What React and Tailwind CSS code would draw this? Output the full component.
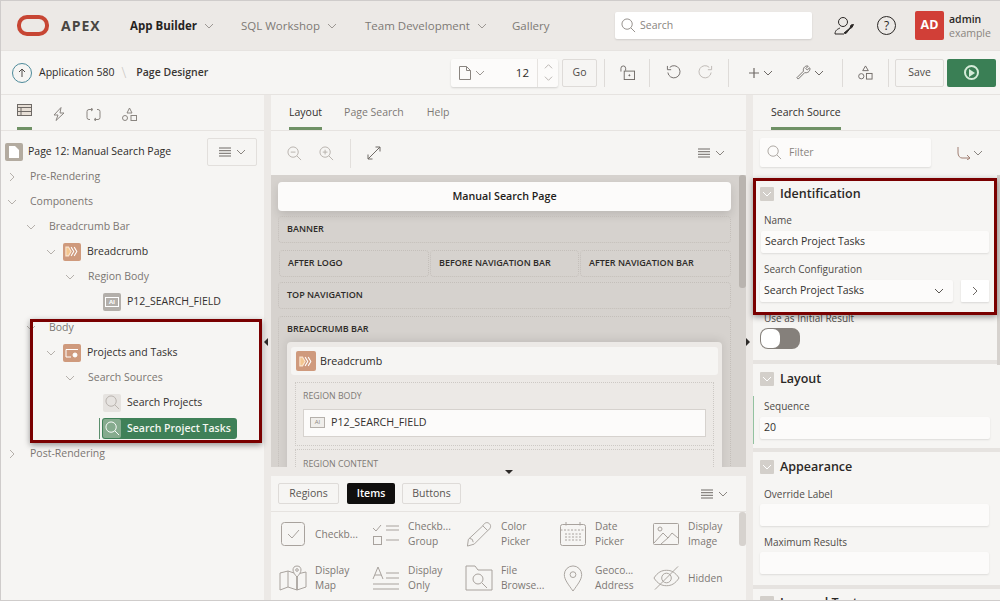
import React from "react";

const Chev = ({ className = "w-[10px] h-[10px] text-[#8a8580]" }) => (
  <svg viewBox="0 0 10 10" className={className} fill="none" stroke="currentColor" strokeWidth="1">
    <path d="M1 3l4 4 4-4" />
  </svg>
);

const ChevRight = ({ className = "w-[10px] h-[10px] text-[#b5b0ab]" }) => (
  <svg viewBox="0 0 10 10" className={className} fill="none" stroke="currentColor" strokeWidth="1">
    <path d="M3 1l4 4-4 4" />
  </svg>
);

const Lens = ({ className = "w-4 h-4 text-[#8f8a85]" }) => (
  <svg viewBox="0 0 16 16" className={className} fill="none" stroke="currentColor" strokeWidth="1">
    <circle cx="6.500" cy="6.500" r="5.500" />
    <path d="M10.500 10.500L15 15" />
  </svg>
);

const MenuBtn = () => (
  <div className="flex items-center gap-[5px]">
    <svg viewBox="0 0 12 10" className="w-[12px] h-[10px] text-[#6f6a66]" fill="none" stroke="currentColor" strokeWidth="1">
      <path d="M0 1h12M0 3.700h12M0 6.300h12M0 9h12" />
    </svg>
    <Chev />
  </div>
);

const Sep = ({ className }) => <div className={`w-px h-[28px] bg-[#dedbd8] ${className}`} />;

const BreadcrumbIcon = ({ className }) => (
  <div className={`bg-[#cf9a7d] rounded-[2px] flex items-center justify-center ${className}`}>
    <svg viewBox="0 0 16 12" className="w-[14px] h-[11px]" fill="none" stroke="#fff" strokeWidth="1.200">
      <path d="M1 1h3l3 5-3 5H1z" fill="#f3c690" stroke="#fbe6d2" />
      <path d="M7 1l3 5-3 5M10.500 1l3 5-3 5" />
    </svg>
  </div>
);

const TreeRow = ({ indent, arrow, icon, dark, className = "", children }) => (
  <div className={`h-[25px] flex items-center text-[10.5px] whitespace-nowrap ${dark ? "text-[#33302e]" : "text-[#7b7672]"} ${indent} ${className}`}>
    {arrow === "right" && <ChevRight className="w-[10px] h-[10px] text-[#b5b0ab] mr-[13px]" />}
    {arrow === "down" && <Chev className="w-[10px] h-[10px] text-[#b5b0ab] mr-[13px]" />}
    {icon}
    {children}
  </div>
);

const RegionBox = ({ children, className = "" }) => (
  <div className={`border border-dotted border-[#c4bfba] rounded-[4px] text-[9px] font-semibold text-[#2d2a28] px-2 pb-[2px] flex items-center whitespace-nowrap ${className}`}>
    {children}
  </div>
);

const stroke = "#a8a29d";

const galleryIcons = {
  check: (
    <svg viewBox="0 0 26 26" className="w-[26px] h-[26px]" fill="none" stroke={stroke}>
      <rect x="1.500" y="1.500" width="23" height="23" rx="3" />
      <path d="M8 13l4 4 7-8" />
    </svg>
  ),
  group: (
    <svg viewBox="0 0 28 22" className="w-[28px] h-[22px]" fill="none" stroke={stroke}>
      <path d="M1 5l3 3 5-6M14 3h13M14 7h13M14 17h13" />
      <rect x="1.500" y="13.500" width="8" height="8" />
    </svg>
  ),
  color: (
    <svg viewBox="0 0 28 28" className="w-[28px] h-[27px]" fill="none" stroke={stroke}>
      <path d="M2 26l1-7L18 5l5 5L9 24zM18 5c2-4 5-4 7-2s1 5-2 7M4 18l3 1 1 3" />
    </svg>
  ),
  date: (
    <svg viewBox="0 0 28 26" className="w-[28px] h-[26px]" fill="none" stroke={stroke}>
      <rect x="1.500" y="3.500" width="25" height="21" rx="2" />
      <path d="M1.500 9h25M7 1v4M21 1v4M6 13h16M6 16h16M6 19h16" strokeDasharray="2 1.500" />
    </svg>
  ),
  image: (
    <svg viewBox="0 0 28 24" className="w-[28px] h-[24px]" fill="none" stroke={stroke}>
      <rect x="1.500" y="1.500" width="25" height="21" rx="1" />
      <circle cx="8" cy="7" r="2" />
      <path d="M2 21l9-10 5 5 4-5 6 5M9 22l8-7" />
    </svg>
  ),
  map: (
    <svg viewBox="0 0 28 26" className="w-[28px] h-[26px]" fill="none" stroke={stroke}>
      <path d="M1 8l8-2 9 3v16l-9-3-8 3zM9 6v16M18 9l9-2v15l-9 3zM18 9v16" />
      <path d="M18 1c3 0 4 2 4 4 0 2-2 5-4 7-2-2-4-5-4-7 0-2 1-4 4-4z" fill="#f6f5f3" />
      <circle cx="18" cy="5" r="1.300" />
    </svg>
  ),
  only: (
    <svg viewBox="0 0 28 24" className="w-[28px] h-[24px]" fill="none" stroke={stroke}>
      <path d="M1 13L6 1l5 12M3 9h6M14 7h13M14 12h13M1 18h26M1 23h26" />
    </svg>
  ),
  file: (
    <svg viewBox="0 0 28 26" className="w-[28px] h-[26px]" fill="none" stroke={stroke}>
      <path d="M1 25V1h9l3 4h14v20z" />
      <circle cx="13" cy="14" r="5" />
      <path d="M17 18l5 5" />
    </svg>
  ),
  geo: (
    <svg viewBox="0 0 20 28" className="w-[20px] h-[27px]" fill="none" stroke={stroke}>
      <path d="M10 27C5 20 1 15 1 10a9 9 0 0118 0c0 5-4 10-9 17z" />
      <circle cx="10" cy="10" r="3" />
    </svg>
  ),
  hidden: (
    <svg viewBox="0 0 28 26" className="w-[27px] h-[26px]" fill="none" stroke={stroke}>
      <path d="M1 13c4-6 8-8 13-8s9 2 13 8c-4 6-8 8-13 8s-9-2-13-8z" />
      <circle cx="14" cy="13" r="5" />
      <path d="M2 25L26 1" />
    </svg>
  ),
};

const GalleryItem = ({ icon, width, children }) => (
  <div className={`flex items-center h-[44px] ${width}`}>
    <div className="w-[42px] flex justify-center shrink-0">{galleryIcons[icon]}</div>
    <div className="ml-[1px] text-[10.2px] leading-[15px] text-[#7d7873] whitespace-nowrap">{children}</div>
  </div>
);

const SectionHead = ({ children, className = "" }) => (
  <div className={`flex items-center h-[24px] px-[7px] ${className}`}>
    <div className="w-[14px] h-[14px] rounded-[1px] bg-[#d3cfca] flex items-center justify-center">
      <Chev className="w-[10px] h-[10px] text-white" />
    </div>
    <span className="ml-[6px] text-[12.5px] font-semibold text-[#2b2826] whitespace-nowrap">{children}</span>
  </div>
);

const Label = ({ children, className = "" }) => (
  <div className={`text-[10px] leading-[14px] text-[#4f4b48] px-[11px] ${className}`}>{children}</div>
);

const Field = ({ children, className = "" }) => (
  <div className={`h-[22px] ml-[7px] bg-[#fcfbfa] rounded-[2px] shadow-[0_1px_2px_rgba(0,0,0,0.1)] text-[10.5px] text-[#33302e] flex items-center px-[4px] ${className}`}>
    {children}
  </div>
);

const NavItem = ({ width, bold, children }) => (
  <div className={`flex items-center whitespace-nowrap ${width}`}>
    <span className={bold ? "font-bold text-[#26231f]" : ""}>{children}</span>
    <Chev className="w-[10px] h-[10px] ml-[7px] text-[#9c9793]" />
  </div>
);

export default function App() {
  return (
    <div
      className="relative w-[1000px] h-[601px] overflow-hidden bg-[#ece9e6] border-t border-l border-b border-[#cfcccb] text-[#33302e]"
      style={{ fontFamily: '"Open Sans", sans-serif' }}
    >
      {/* top nav */}
      <div className="h-[49px] bg-[#ece9e6] flex items-center text-[11.5px] text-[#7d7975]">
        <div className="w-[614px] shrink-0 flex items-center">
          <div className="w-[32px] h-[21px] ml-[16px] border-[4px] border-[#c74634] rounded-[10px]" />
          <span className="ml-[12px] w-[69px] text-[14px] font-bold tracking-[1px] text-[#494643]">APEX</span>
          <NavItem width="w-[111px]" bold>App Builder</NavItem>
          <NavItem width="w-[124px]">SQL Workshop</NavItem>
          <NavItem width="w-[147px]">Team Development</NavItem>
          <span>Gallery</span>
        </div>
        <div className="w-[197px] h-[27px] bg-white rounded-[2px] shadow-[0_1px_2px_rgba(0,0,0,0.12)] flex items-center px-[6px]">
          <Lens className="w-[15px] h-[15px] text-[#8f8a85]" />
          <span className="ml-[4px] text-[10.5px] text-[#8a8580]">Search</span>
        </div>
        <svg viewBox="0 0 20 20" className="ml-[22px] w-[20px] h-[20px]" fill="none" stroke="#2a2725" strokeWidth="1">
          <circle cx="9" cy="6" r="4.500" />
          <path d="M1 18c0-4 3-5 5-6M1 18h9" />
          <path d="M10 17l6-5 1-3 2.500-.5-1.500 3-2 1-4 5z" fill="#2a2725" />
        </svg>
        <div className="ml-[23px] w-[19px] h-[19px] rounded-full border border-[#2a2725] flex items-center justify-center text-[12px] text-[#2a2725]">?</div>
        <div className="ml-[19px] w-[29px] h-[29px] rounded-[2px] bg-[#d13f37] flex items-center justify-center text-white text-[12.5px] font-bold">AD</div>
        <div className="ml-[5px] text-[10.5px] leading-[14px] whitespace-nowrap">
          <div className="font-semibold text-[#2a2725]">admin</div>
          <div className="text-[#8a8580]">example</div>
        </div>
      </div>

      {/* page designer toolbar */}
      <div className="h-[45px] bg-[#f6f5f3] border-t border-b border-[#e6e3e0] flex items-center text-[10.5px]">
        <div className="w-[450px] shrink-0 flex items-center whitespace-nowrap">
          <div className="ml-[11px] w-[20px] h-[20px] rounded-full border border-[#4d8a9a] flex items-center justify-center">
            <svg viewBox="0 0 10 10" className="w-[10px] h-[10px]" fill="none" stroke="#4f4b48">
              <path d="M5 9V1M2 4l3-3 3 3" />
            </svg>
          </div>
          <span className="ml-[7px] text-[#2d2a28]">Application 580</span>
          <span className="ml-[7px] text-[#c9c5c1] text-[14px] font-light">\</span>
          <span className="ml-[10px] font-semibold text-[#3a3734]">Page Designer</span>
        </div>
        <div className="w-[107px] h-[28px] bg-[#fcfbfa] rounded-[2px] shadow-[0_1px_2px_rgba(0,0,0,0.15)] flex items-center">
          <svg viewBox="0 0 12 14" className="ml-[8px] w-[12px] h-[14px]" fill="none" stroke="#8a8580">
            <path d="M.5.500h7l4 4v9H.5zM7.500.500v4h4" />
          </svg>
          <Chev className="ml-[4px] w-[10px] h-[10px] text-[#9c9793]" />
          <span className="ml-auto mr-[8px] text-[11.5px] text-[#2d2a28]">12</span>
          <div className="w-[21px] h-full border-l border-[#e6e3e0] flex flex-col items-center justify-center gap-[3px]">
            <Chev className="w-[9px] h-[9px] text-[#b5b0ab] rotate-180" />
            <Chev className="w-[9px] h-[9px] text-[#b5b0ab]" />
          </div>
        </div>
        <div className="ml-[4px] w-[35px] h-[28px] rounded-[2px] border border-[#dedbd8] flex items-center justify-center text-[#4f4b48]">Go</div>
        <Sep className="ml-[7px]" />
        <svg viewBox="0 0 16 16" className="ml-[15px] w-[15px] h-[15px]" fill="none" stroke="#6f6a66">
          <rect x="4.500" y="6.500" width="11" height="9" />
          <path d="M1 7V3.500a2.500 2.500 0 015 0V6" />
          <circle cx="10" cy="11" r=".6" fill="#6f6a66" />
        </svg>
        <Sep className="ml-[14px]" />
        <svg viewBox="0 0 16 16" className="ml-[16px] w-[15px] h-[15px]" fill="none" stroke="#6f6a66" strokeWidth="1">
          <path d="M4 2.500A6.500 6.500 0 112 8M1.500 1v4h4" />
        </svg>
        <svg viewBox="0 0 16 16" className="ml-[17px] w-[15px] h-[15px]" fill="none" stroke="#bdb8b3" strokeWidth="1">
          <path d="M12 2.500A6.500 6.500 0 1014 8M14.500 1v4h-4" />
        </svg>
        <Sep className="ml-[15px]" />
        <svg viewBox="0 0 10 10" className="ml-[20px] w-[10px] h-[10px]" fill="none" stroke="#6f6a66" strokeWidth="1.200">
          <path d="M5 0v10M0 5h10" />
        </svg>
        <Chev className="ml-[4px] w-[10px] h-[10px] text-[#6f6a66]" />
        <svg viewBox="0 0 16 16" className="ml-[23px] w-[15px] h-[15px]" fill="none" stroke="#6f6a66">
          <path d="M1 13.500L8 6.500c-.8-2.500 1-5.500 4-5.500l1 .3-2.500 2.500 1.500 1.500L14.500 3l.4 1c0 3-3 5-5.500 4l-7 7z" />
        </svg>
        <Chev className="ml-[3px] w-[10px] h-[10px] text-[#6f6a66]" />
        <Sep className="ml-[18px]" />
        <svg viewBox="0 0 16 16" className="ml-[15px] w-[15px] h-[15px]" fill="none" stroke="#6f6a66">
          <path d="M8 1l3 5H5z" />
          <circle cx="3.500" cy="12" r="2.800" />
          <rect x="9" y="9" width="6" height="6" />
        </svg>
        <Sep className="ml-[15px]" />
        <div className="ml-[6px] w-[49px] h-[28px] rounded-[2px] border border-[#dedbd8] flex items-center justify-center text-[#4f4b48]">Save</div>
        <div className="ml-[3px] w-[49px] h-[28px] rounded-[2px] bg-[#3a7f55] flex items-center justify-center">
          <div className="w-[15px] h-[15px] rounded-full border-2 border-[#d5ecd9] flex items-center justify-center">
            <div className="ml-[1px] border-l-[6px] border-l-[#d5ecd9] border-y-[4px] border-y-transparent" />
          </div>
        </div>
      </div>

      {/* three panels */}
      <div className="h-[505px] flex">
        {/* left tree */}
        <div className="w-[263px] bg-[#f6f5f3] shrink-0">
          <div className="h-[36px] border-b border-[#e6e3e0] flex items-end pl-[16px] gap-[21px]">
            <div className="w-[15px] h-[26px] border-b-[3px] border-[#6f9165] flex justify-center">
              <svg viewBox="0 0 15 12" className="w-[15px] h-[12px]" fill="none" stroke="#6f6a66">
                <rect x=".5" y=".5" width="14" height="11" fill="#e7dfd6" />
                <path d="M.5 3.500h14M.5 7.500h14M4 3.500v8" />
              </svg>
            </div>
            <svg viewBox="0 0 12 14" className="w-[12px] h-[14px] mb-[9px]" fill="none" stroke="#8a8580">
              <path d="M8 .5L1 8h4l-2 5.500L11 6H7z" />
            </svg>
            <svg viewBox="0 0 15 13" className="w-[15px] h-[13px] mb-[9px]" fill="none" stroke="#8a8580">
              <path d="M6 1.500H3a2 2 0 00-2 2v6a2 2 0 002 2h1M9 11.500h3a2 2 0 002-2v-6a2 2 0 00-2-2h-1M5 0l2 1.500L5 3M10 10l-2 1.500L10 13" />
            </svg>
            <svg viewBox="0 0 15 14" className="w-[15px] h-[14px] mb-[9px]" fill="none" stroke="#8a8580">
              <path d="M7.500 1l2.500 5H5z" />
              <circle cx="3" cy="11" r="2.500" />
              <rect x="9" y="8.500" width="5.500" height="5" />
            </svg>
          </div>
          <div className="pl-[4px]">
            <div className="h-[41px] flex items-center">
              <div className="w-[18px] h-[18px] rounded-[2px] bg-[#b3aba0] flex items-center justify-center">
                <svg viewBox="0 0 10 12" className="w-[10px] h-[12px]" fill="#fff">
                  <path d="M0 0h6l4 4v8H0z" />
                </svg>
              </div>
              <span className="ml-[5px] text-[10.5px] text-[#2d2a28] whitespace-nowrap">Page 12: Manual Search Page</span>
              <div className="ml-[auto] mr-[7px] w-[50px] h-[28px] rounded-[2px] border border-[#e2dfdc] flex items-center justify-center">
                <MenuBtn />
              </div>
            </div>
            <div className="-mt-[8px]">
              <TreeRow indent="pl-[2px]" arrow="right">Pre-Rendering</TreeRow>
              <TreeRow indent="pl-[2px]" arrow="down">Components</TreeRow>
              <TreeRow indent="pl-[21px]" arrow="down">Breadcrumb Bar</TreeRow>
              <TreeRow indent="pl-[41px]" arrow="down" dark icon={<BreadcrumbIcon className="w-[18px] h-[18px] -ml-[6px] mr-[6px]" />}>Breadcrumb</TreeRow>
              <TreeRow indent="pl-[60px]" arrow="down">Region Body</TreeRow>
              <TreeRow
                indent="pl-[98px]"
                dark
                icon={
                  <div className="w-[18px] h-[18px] mr-[6px] rounded-[2px] bg-[#b3afaa] flex items-center justify-center">
                    <div className="w-[14px] h-[10px] border border-white text-[6px] leading-[8px] font-bold text-white text-center">AI</div>
                  </div>
                }
              >
                P12_SEARCH_FIELD
              </TreeRow>
              <TreeRow indent="pl-[21px]" arrow="down" className="mt-[1px]">Body</TreeRow>
              <TreeRow
                indent="pl-[41px]"
                arrow="down"
                dark
                icon={
                  <div className="w-[18px] h-[18px] -ml-[6px] mr-[6px] rounded-[2px] bg-[#cf9a7d] flex items-center justify-center">
                    <svg viewBox="0 0 14 12" className="w-[14px] h-[12px]" fill="none" stroke="#fff">
                      <path d="M1 10V2.500h12M1 10h5" />
                      <circle cx="10" cy="8" r="2" fill="#fff" />
                    </svg>
                  </div>
                }
              >
                Projects and Tasks
              </TreeRow>
              <TreeRow indent="pl-[60px]" arrow="down">Search Sources</TreeRow>
              <TreeRow
                indent="pl-[98px]"
                dark
                icon={
                  <div className="w-[18px] h-[18px] mr-[6px] rounded-[2px] bg-[#e6e3e0] flex items-center justify-center">
                    <Lens className="w-[15px] h-[15px] text-[#b5b0ab]" />
                  </div>
                }
              >
                Search Projects
              </TreeRow>
              <div className="h-[25px] mt-[1px] flex items-center pl-[94px]">
                <div className="w-px h-[21px] bg-[#5c8f6d] mr-[2px]" />
                <div className="w-[135px] h-[21px] bg-[#3f8058] rounded-[3px] flex items-center text-[10.5px] font-semibold text-[#f3f7f1] whitespace-nowrap">
                  <div className="w-[18px] h-[19px] ml-[1px] mr-[6px] rounded-[2px] bg-[#86ab8e] flex items-center justify-center">
                    <Lens className="w-[15px] h-[15px] text-white" />
                  </div>
                  Search Project Tasks
                </div>
              </div>
              <TreeRow indent="pl-[2px]" arrow="right">Post-Rendering</TreeRow>
            </div>
          </div>
        </div>

        {/* splitter */}
        <div className="w-[7px] flex items-center shrink-0">
          <div className="border-r-[4px] border-r-[#2d2a28] border-y-[4px] border-y-transparent -mt-[11px]" />
        </div>

        {/* center */}
        <div className="w-[475px] flex flex-col shrink-0">
          <div className="h-[372px] flex flex-col bg-[#f6f5f3] shrink-0">
            <div className="h-[36px] shrink-0 border-b border-[#e6e3e0] flex items-end pl-[18px] text-[10.5px] text-[#7d7975]">
              <div className="h-[27px] pt-[2px] border-b-[3px] border-[#6f9165] text-[#33302e]">Layout</div>
              <div className="h-[27px] pt-[2px] ml-[22px]">Page Search</div>
              <div className="h-[27px] pt-[2px] ml-[23px]">Help</div>
            </div>
            <div className="h-[44px] shrink-0 flex items-center pl-[16px] pr-[21px]">
              <svg viewBox="0 0 16 16" className="w-[15px] h-[15px]" fill="none" stroke="#b5b0ab">
                <circle cx="6.500" cy="6.500" r="5.500" />
                <path d="M10.500 10.500L15 15M4 6.500h5" />
              </svg>
              <svg viewBox="0 0 16 16" className="ml-[17px] w-[15px] h-[15px]" fill="none" stroke="#b5b0ab">
                <circle cx="6.500" cy="6.500" r="5.500" />
                <path d="M10.500 10.500L15 15M4 6.500h5M6.500 4v5" />
              </svg>
              <div className="ml-[16px] w-px h-[29px] bg-[#e2dfdc]" />
              <svg viewBox="0 0 14 14" className="ml-[16px] w-[14px] h-[14px]" fill="none" stroke="#6f6a66">
                <path d="M1 13L13 1M8.500 1H13v4.500M1 8.500V13h4.500" />
              </svg>
              <div className="ml-auto">
                <MenuBtn />
              </div>
            </div>
            <div className="relative flex-1 overflow-hidden bg-[#d6d2ce] px-[7px] pt-[7px] pr-[15px]">
              <div className="absolute right-0 top-0 w-[7px] h-[113px] rounded-[3px] bg-[#b9b4af]" />
              <div className="h-[29px] rounded-[4px] bg-[#fcfbfa] shadow-[0_4px_10px_rgba(0,0,0,0.12)] flex items-center justify-center text-[10.7px] font-semibold text-[#1f1d1b]">
                Manual Search Page
              </div>
              <RegionBox className="mt-[5px] h-[27px]">BANNER</RegionBox>
              <div className="mt-[7px] flex gap-[1px] pl-[1px]">
                <RegionBox className="w-[150px] h-[27px]">AFTER LOGO</RegionBox>
                <RegionBox className="w-[149px] h-[27px]">BEFORE NAVIGATION BAR</RegionBox>
                <RegionBox className="flex-1 h-[27px]">AFTER NAVIGATION BAR</RegionBox>
              </div>
              <RegionBox className="mt-[5px] h-[27px]">TOP NAVIGATION</RegionBox>
              <div className="mt-[7px] border border-dotted border-[#c4bfba] rounded-[4px] px-[8px] h-[200px]">
                <div className="h-[25px] pb-[2px] flex items-center text-[9px] font-semibold text-[#2d2a28]">BREADCRUMB BAR</div>
                <div className="bg-[#ece9e6] rounded-t-[4px] shadow-[0_-2px_10px_rgba(0,0,0,0.1)] px-[4px] pt-[5px] h-[170px]">
                  <div className="h-[28px] rounded-[3px] bg-[#f6f5f3] flex items-center pl-[5px] text-[10.7px] text-[#2d2a28]">
                    <BreadcrumbIcon className="w-[20px] h-[20px] mr-[4px]" />
                    Breadcrumb
                  </div>
                  <div className="mt-[7px] mx-[4px] h-[64px] border border-dotted border-[#cdc9c5] px-[7px]">
                    <div className="h-[26px] pt-[2px] flex items-center text-[8.8px] text-[#7d7975]">REGION BODY</div>
                    <div className="h-[28px] pb-[2px] bg-[#fcfbfa] border border-[#d6d2ce] flex items-center pl-[6px] text-[10.7px] text-[#33302e]">
                      <div className="w-[15px] h-[11px] border border-[#b5b0ab] bg-[#f0eeeb] text-[6px] leading-[9px] text-center text-[#8a8580] mr-[6px]">AI</div>
                      P12_SEARCH_FIELD
                    </div>
                  </div>
                  <div className="mt-[3px] mx-[4px] h-[40px] border border-dotted border-[#cdc9c5] px-[7px]">
                    <div className="h-[26px] pt-[4px] flex items-center text-[8.8px] text-[#7d7975]">REGION CONTENT</div>
                  </div>
                </div>
              </div>
            </div>
          </div>

          {/* splitter */}
          <div className="h-[9px] shrink-0 flex justify-center">
            <div className="border-t-[4px] border-t-[#2d2a28] border-x-[4px] border-x-transparent h-0 mt-[3px]" />
          </div>

          {/* gallery */}
          <div className="flex-1 bg-[#f6f5f3] overflow-hidden">
            <div className="h-[36px] border-b border-[#e6e3e0] flex items-center pl-[7px] pr-[18px] text-[10.5px]">
              <div className="w-[61px] h-[21px] rounded-[2px] border border-[#dedbd8] flex items-center justify-center text-[#5a5652]">Regions</div>
              <div className="ml-[8px] w-[48px] h-[21px] rounded-[2px] bg-[#100f0e] flex items-center justify-center font-semibold text-white">Items</div>
              <div className="ml-[7px] w-[59px] h-[21px] rounded-[2px] border border-[#dedbd8] flex items-center justify-center text-[#5a5652]">Buttons</div>
              <div className="ml-auto">
                <MenuBtn />
              </div>
            </div>
            <div className="relative pl-[1px]">
              <div className="absolute right-0 top-0 w-[7px] h-[34px] rounded-[3px] bg-[#d6d2ce]" />
              <div className="flex">
                <GalleryItem icon="check" width="w-[93px]">Checkb...</GalleryItem>
                <GalleryItem icon="group" width="w-[93px]"><div>Checkb...</div><div>Group</div></GalleryItem>
                <GalleryItem icon="color" width="w-[94px]"><div>Color</div><div>Picker</div></GalleryItem>
                <GalleryItem icon="date" width="w-[93px]"><div>Date</div><div>Picker</div></GalleryItem>
                <GalleryItem icon="image" width="w-[85px]"><div>Display</div><div>Image</div></GalleryItem>
              </div>
              <div className="flex">
                <GalleryItem icon="map" width="w-[93px]"><div>Display</div><div>Map</div></GalleryItem>
                <GalleryItem icon="only" width="w-[93px]"><div>Display</div><div>Only</div></GalleryItem>
                <GalleryItem icon="file" width="w-[94px]"><div>File</div><div>Browse...</div></GalleryItem>
                <GalleryItem icon="geo" width="w-[93px]"><div>Geoco...</div><div>Address</div></GalleryItem>
                <GalleryItem icon="hidden" width="w-[85px]">Hidden</GalleryItem>
              </div>
            </div>
          </div>
        </div>

        {/* splitter */}
        <div className="w-[7px] flex items-center shrink-0">
          <div className="border-l-[4px] border-l-[#2d2a28] border-y-[4px] border-y-transparent -mt-[11px]" />
        </div>

        {/* right props */}
        <div className="relative flex-1 bg-[#f6f5f3] overflow-hidden">
          <div className="absolute right-0 top-[80px] w-[3px] h-[190px] bg-[#d6d2ce]" />
          <div className="h-[36px] border-b border-[#e6e3e0] flex items-end pl-[18px] text-[10.5px]">
            <div className="h-[27px] pt-[2px] border-b-[3px] border-[#6f9165] text-[#33302e]">Search Source</div>
          </div>
          <div className="h-[43px] flex items-center pl-[7px]">
            <div className="w-[171px] h-[29px] bg-[#fcfbfa] rounded-[2px] shadow-[0_1px_2px_rgba(0,0,0,0.1)] flex items-center px-[7px]">
              <Lens className="w-[15px] h-[15px] text-[#a8a29d]" />
              <span className="ml-[7px] text-[10.5px] text-[#8a8580]">Filter</span>
            </div>
            <svg viewBox="0 0 14 14" className="ml-[26px] w-[14px] h-[14px]" fill="none" stroke="#a07f72">
              <path d="M1 1v6c0 3 2 5 4 5h8M10 9l3 3-3 2" />
            </svg>
            <Chev className="ml-[2px] w-[10px] h-[10px] text-[#8a8580]" />
          </div>
          <div className="h-[186px] pt-[8px]">
            <SectionHead>Identification</SectionHead>
            <div className="mt-[7px] border-l border-[#b9d2be] -ml-[1px] pl-[1px]">
              <Label className="!px-[10px]">Name</Label>
              <Field className="mt-[4px] mr-[11px]">Search Project Tasks</Field>
            </div>
            <Label className="mt-[9px]">Search Configuration</Label>
            <div className="mt-[4px] flex">
              <Field className="w-[193px] justify-between shrink-0">
                Search Project Tasks
                <Chev className="w-[10px] h-[10px] text-[#5a5652] mr-[5px]" />
              </Field>
              <div className="ml-[8px] w-[28px] h-[22px] bg-white rounded-[1px] shadow-[0_1px_2px_rgba(0,0,0,0.12)] flex items-center justify-center">
                <ChevRight className="w-[10px] h-[10px] text-[#6f6a66]" />
              </div>
            </div>
            <Label className="mt-[9px]">Use as Initial Result</Label>
            <div className="mt-[3px] ml-[7px] w-[40px] h-[21px] rounded-[8px] bg-[#85807b] flex items-center pl-[1px]">
              <div className="w-[19px] h-[19px] rounded-[7px] bg-white" />
            </div>
          </div>
          <div className="h-[4px] bg-[#e6e3e0]" />
          <div className="h-[84px] pt-[3px]">
            <SectionHead>Layout</SectionHead>
            <div className="mt-[5px] border-l-2 border-[#93c2a0] h-[48px] -ml-[1px] -mr-[1px]">
              <Label className="pt-[3px] !px-[10px]">Sequence</Label>
              <Field className="mt-[4px] mr-[11px] !ml-[6px]">20</Field>
            </div>
          </div>
          <div className="h-[4px] bg-[#e6e3e0]" />
          <div className="h-[133px] pt-[3px]">
            <SectionHead>Appearance</SectionHead>
            <Label className="mt-[8px]">Override Label</Label>
            <Field className="mt-[3px] mr-[11px]" />
            <Label className="mt-[9px]">Maximum Results</Label>
            <Field className="mt-[3px] mr-[11px]" />
          </div>
          <div className="h-[4px] bg-[#e6e3e0]" />
          <SectionHead className="mt-[2px]">Layered Text</SectionHead>
        </div>
      </div>

      {/* review highlights */}
      <div className="absolute left-[29px] top-[318px] w-[232px] h-[124px] border-[3px] border-[#7a0000] shadow-[0_2px_6px_rgba(0,0,0,0.4)]" />
      <div className="absolute left-[752px] top-[177px] w-[244px] h-[137px] border-[3px] border-[#7a0000] shadow-[0_2px_6px_rgba(0,0,0,0.4)]" />
    </div>
  );
}
